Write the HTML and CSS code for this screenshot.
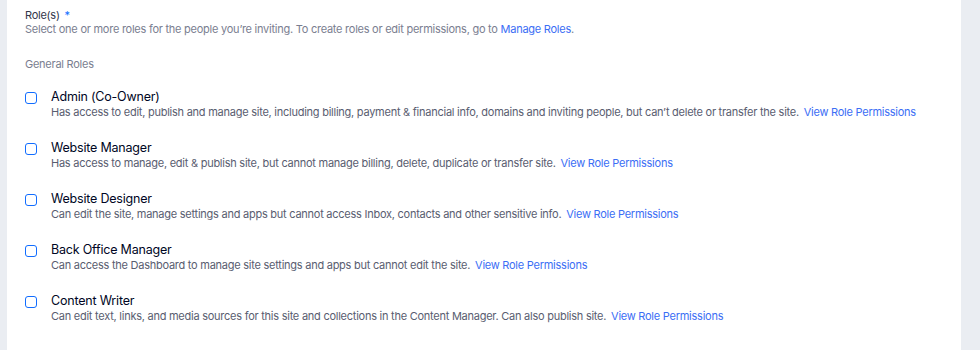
FILE: index.html
```html
<!DOCTYPE html>
<html>
<head>
<meta charset="utf-8">
<link rel="stylesheet" href="styles.css">
</head>
<body>
<div class="page">
  <div class="panel">
    <div class="label">Role(s) <span class="req">*</span></div>
    <div class="hint">Select one or more roles for the people you’re inviting. To create roles or edit permissions, go to <a class="link" href="#">Manage Roles</a>.</div>
    <div class="section">General Roles</div>
    <ul class="roles">
      <li class="role">
        <span class="box"></span>
        <div class="info">
          <div class="title">Admin (Co-Owner)</div>
          <div class="desc">Has access to edit, publish and manage site, including billing, payment &amp; financial info, domains and inviting people, but can’t delete or transfer the site. <a class="link more" href="#">View Role Permissions</a></div>
        </div>
      </li>
      <li class="role">
        <span class="box"></span>
        <div class="info">
          <div class="title">Website Manager</div>
          <div class="desc">Has access to manage, edit &amp; publish site, but cannot manage billing, delete, duplicate or transfer site. <a class="link more" href="#">View Role Permissions</a></div>
        </div>
      </li>
      <li class="role">
        <span class="box"></span>
        <div class="info">
          <div class="title">Website Designer</div>
          <div class="desc">Can edit the site, manage settings and apps but cannot access Inbox, contacts and other sensitive info. <a class="link more" href="#">View Role Permissions</a></div>
        </div>
      </li>
      <li class="role">
        <span class="box"></span>
        <div class="info">
          <div class="title">Back Office Manager</div>
          <div class="desc">Can access the Dashboard to manage site settings and apps but cannot edit the site. <a class="link more" href="#">View Role Permissions</a></div>
        </div>
      </li>
      <li class="role">
        <span class="box"></span>
        <div class="info">
          <div class="title">Content Writer</div>
          <div class="desc">Can edit text, links, and media sources for this site and collections in the Content Manager. Can also publish site. <a class="link more" href="#">View Role Permissions</a></div>
        </div>
      </li>
    </ul>
  </div>
</div>
</body>
</html>
```

FILE: styles.css
```css
* { box-sizing: border-box; }
html, body {
  margin: 0;
  padding: 0;
  background: #eaedf2;
  font-family: Inter, "Noto Sans", "Liberation Sans", sans-serif;
}
.page {
  height: 350px;
  display: flex;
  padding-left: 7px;
}
.panel {
  width: 954px;
  background: #ffffff;
  padding: 8px 18px 0 18px;
}
.label {
  font-size: 11px;
  line-height: 14px;
  letter-spacing: -0.25px;
  color: #32364a;
}
.req { color: #116dff; margin-left: 2px; }
.hint {
  font-size: 11px;
  line-height: 14px;
  letter-spacing: -0.25px;
  color: #7a7e90;
}
.link { color: #3b6ef5; text-decoration: none; }
.more { margin-left: 2px; }
.section {
  margin-top: 21px;
  font-size: 11px;
  line-height: 14px;
  letter-spacing: -0.25px;
  color: #7a7e90;
}
.roles {
  list-style: none;
  margin: 18px 0 0 0;
  padding: 0;
  display: flex;
  flex-direction: column;
  gap: 21px;
}
.role {
  display: flex;
  align-items: flex-start;
  gap: 14px;
}
.box {
  flex: none;
  width: 12px;
  height: 12px;
  margin-top: 3px;
  border: 1.5px solid #116dff;
  border-radius: 3px;
  background: #fff;
}
.title {
  font-size: 12.5px;
  line-height: 16px;
  letter-spacing: -0.2px;
  color: #000624;
}
.desc {
  font-size: 11px;
  line-height: 14px;
  letter-spacing: -0.25px;
  color: #595d70;
}
```
